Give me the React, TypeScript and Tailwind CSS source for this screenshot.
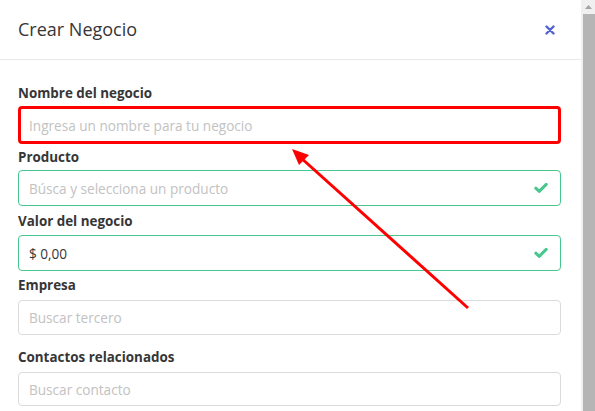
import React from 'react'

interface FieldProps {
  label: string
  placeholder?: string
  value?: string
  valid?: boolean
  labelClass: string
  inputClass: string
  highlight?: boolean
}

function Check() {
  return (
    <svg width="14" height="12" viewBox="0 0 14 12" className="absolute right-[12px] top-1/2 -translate-y-1/2">
      <path d="M1.8 6.2 L5.2 9.4 L12.2 2.4" fill="none" stroke="#48c78e" strokeWidth="3" strokeLinecap="round" strokeLinejoin="round" />
    </svg>
  )
}

function Field({ label, placeholder, value, valid, labelClass, inputClass, highlight }: FieldProps) {
  const border = highlight
    ? 'border-[3px] border-[#ff0000] pl-[8px]'
    : valid
    ? 'border border-[#48c78e] pl-[10px]'
    : 'border border-[#dbdbdb] pl-[10px]'
  return (
    <div>
      <div className={`h-5 text-[13.4px] leading-5 font-bold text-[#363636] ${labelClass}`}>{label}</div>
      <div className={`relative flex items-center rounded-[4px] bg-white pt-[2px] ${border} ${inputClass}`}>
        {value ? (
          <span className="text-[13.6px] text-[#363636]">{value}</span>
        ) : (
          <span className="text-[13.6px] text-[#c2c2c2]">{placeholder}</span>
        )}
        {valid && <Check />}
      </div>
    </div>
  )
}

export default function App() {
  return (
    <div className="relative flex h-[411px] w-[595px] overflow-hidden bg-white font-['Open_Sans',sans-serif]">
      <div className="flex-1">
        <div className="flex h-[60px] items-center justify-between border-b border-[#e8e8e8] pl-[18px] pr-[26px]">
          <h1 className="text-[18px] text-[#363636]">Crear Negocio</h1>
          <svg width="10" height="10" viewBox="0 0 10 10">
            <path d="M1.5 1.5 L8.5 8.5 M8.5 1.5 L1.5 8.5" stroke="#5262d6" strokeWidth="2.4" strokeLinecap="round" />
          </svg>
        </div>
        <div className="pl-[18px] pr-[20px] pt-[23px]">
          <Field label="Nombre del negocio" placeholder="Ingresa un nombre para tu negocio" highlight labelClass="" inputClass="mt-[3px] h-[38px]" />
          <Field label="Producto" placeholder="Búsca y selecciona un producto" valid labelClass="mt-[3px]" inputClass="mt-[3px] h-9" />
          <Field label="Valor del negocio" value="$ 0,00" valid labelClass="mt-[5px]" inputClass="mt-1 h-9" />
          <Field label="Empresa" placeholder="Buscar tercero" labelClass="mt-1" inputClass="mt-[5px] h-[35px]" />
          <Field label="Contactos relacionados" placeholder="Buscar contacto" labelClass="mt-3" inputClass="mt-[5px] h-[34px]" />
        </div>
      </div>
      <div className="flex w-[14px] flex-col bg-[#f0f0f0]">
        <div className="flex h-[14px] items-center justify-center">
          <svg width="7" height="4" viewBox="0 0 7 4">
            <path d="M0 4 L3.5 0 L7 4 Z" fill="#a3a3a3" />
          </svg>
        </div>
        <div className="ml-[2px] flex-1 bg-[#b5b5b5]" />
      </div>
      <svg className="pointer-events-none absolute left-0 top-0" width="595" height="411">
        <line x1="468" y1="308" x2="300" y2="157" stroke="#ff0000" strokeWidth="3" />
        <polygon points="292,149 309,155 299,165" fill="#ff0000" />
      </svg>
    </div>
  )
}
